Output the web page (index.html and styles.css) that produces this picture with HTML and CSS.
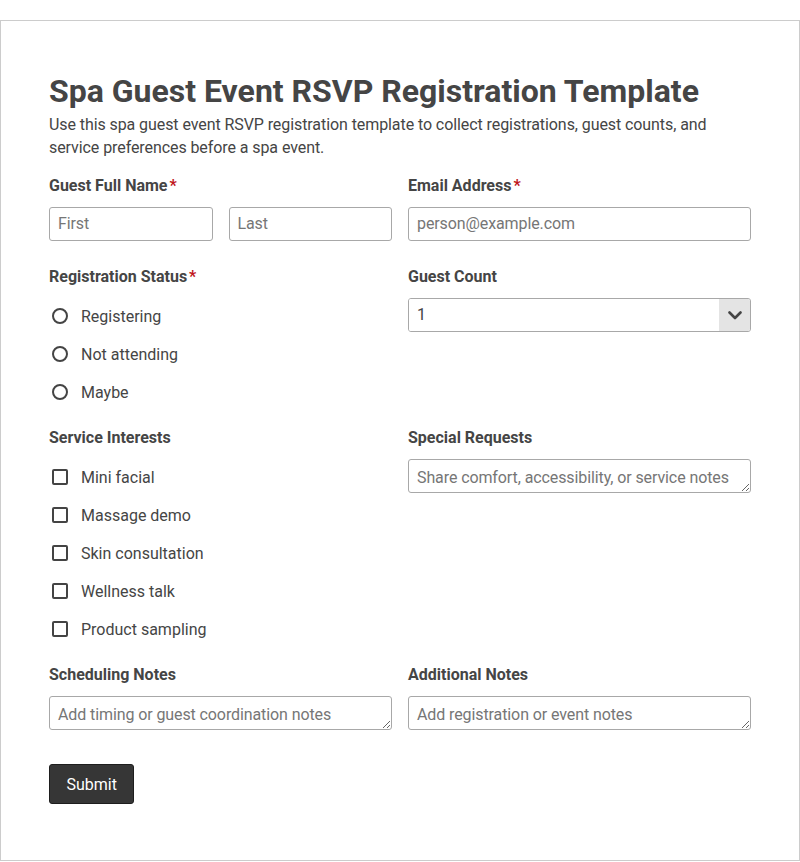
FILE: index.html
```html
<!DOCTYPE html>
<html lang="en">
<head>
<meta charset="utf-8">
<title>Spa Guest Event RSVP Registration Template</title>
<link rel="stylesheet" href="styles.css">
</head>
<body>
<form class="card">
  <h1 class="title">Spa Guest Event RSVP Registration Template</h1>
  <p class="desc">Use this spa guest event RSVP registration template to collect registrations, guest counts, and service preferences before a spa event.</p>
  <div class="grid">
    <div class="field">
      <div class="label">Guest Full Name<span class="req">*</span></div>
      <div class="name-row">
        <input class="input" type="text" placeholder="First">
        <input class="input" type="text" placeholder="Last">
      </div>
    </div>
    <div class="field">
      <div class="label">Email Address<span class="req">*</span></div>
      <input class="input" type="email" placeholder="person@example.com">
    </div>

    <div class="field">
      <div class="label">Registration Status<span class="req">*</span></div>
      <div class="options">
        <label class="option"><input class="radio" type="radio" name="status"><span>Registering</span></label>
        <label class="option"><input class="radio" type="radio" name="status"><span>Not attending</span></label>
        <label class="option"><input class="radio" type="radio" name="status"><span>Maybe</span></label>
      </div>
    </div>
    <div class="field">
      <div class="label">Guest Count</div>
      <div class="select-wrap">
        <select class="select"><option>1</option><option>2</option><option>3</option><option>4</option></select>
        <span class="select-arrow"><svg width="14" height="9" viewBox="0 0 14 9"><path d="M1.5 1.5 L7 7 L12.5 1.5" fill="none" stroke="#444" stroke-width="2.6" stroke-linecap="round" stroke-linejoin="round"/></svg></span>
      </div>
    </div>

    <div class="field">
      <div class="label">Service Interests</div>
      <div class="options">
        <label class="option"><input class="check" type="checkbox"><span>Mini facial</span></label>
        <label class="option"><input class="check" type="checkbox"><span>Massage demo</span></label>
        <label class="option"><input class="check" type="checkbox"><span>Skin consultation</span></label>
        <label class="option"><input class="check" type="checkbox"><span>Wellness talk</span></label>
        <label class="option"><input class="check" type="checkbox"><span>Product sampling</span></label>
      </div>
    </div>
    <div class="field">
      <div class="label">Special Requests</div>
      <textarea class="textarea" rows="1" placeholder="Share comfort, accessibility, or service notes"></textarea>
    </div>

    <div class="field">
      <div class="label">Scheduling Notes</div>
      <textarea class="textarea" rows="1" placeholder="Add timing or guest coordination notes"></textarea>
    </div>
    <div class="field">
      <div class="label">Additional Notes</div>
      <textarea class="textarea" rows="1" placeholder="Add registration or event notes"></textarea>
    </div>
  </div>
  <button class="submit" type="button">Submit</button>
</form>
</body>
</html>
```
FILE: styles.css
```css
* { box-sizing: border-box; }
html, body { margin: 0; padding: 0; background: #fff; }
body {
  font-family: Roboto, "Liberation Sans", Arial, sans-serif;
  color: #444;
  padding-top: 20px;
}
.card {
  border: 1px solid #ccc;
  padding: 51px 48px 56px;
  width: 800px;
}
.title {
  margin: 0;
  font-size: 32px;
  line-height: 38px;
  font-weight: 700;
  color: #454545;
}
.desc {
  margin: 3px 0 14px;
  font-size: 16px;
  line-height: 23px;
  color: #454545;
  letter-spacing: -0.08px;
}
.grid {
  display: grid;
  grid-template-columns: 1fr 1fr;
  column-gap: 16px;
  row-gap: 23px;
  align-items: start;
}
.field { display: flex; flex-direction: column; }
.label {
  font-size: 16px;
  line-height: 24px;
  padding-top: 1px;
  font-weight: 700;
  color: #454545;
  margin-bottom: 9px;
}
.req { color: #c0151b; margin-left: 2px; }
.name-row { display: grid; grid-template-columns: 1fr 1fr; column-gap: 16px; }
.input, .textarea, .select {
  font-family: Roboto, "Liberation Sans", Arial, sans-serif;
  font-size: 16px;
  color: #454545;
  letter-spacing: -0.1px;
}
.input {
  height: 34px;
  width: 100%;
  border: 1px solid #a8a8a8;
  border-radius: 3px;
  padding: 0 8px 2px;
  outline: none;
}
.input::placeholder, .textarea::placeholder { color: #767676; }
.textarea {
  height: 34px;
  min-height: 34px;
  width: 100%;
  border: 1px solid #a8a8a8;
  border-radius: 3px;
  padding: 7px 8px 3px;
  line-height: 22px;
  display: block;
  resize: vertical;
  outline: none;
}
.options { display: flex; flex-direction: column; gap: 8px; margin: 3px 0 -5px; }
.option {
  display: flex;
  align-items: center;
  height: 30px;
  font-size: 16px;
  color: #454545;
}
.radio, .check {
  appearance: none;
  -webkit-appearance: none;
  width: 16px;
  height: 16px;
  margin: 0 13px 0 3px;
  border: 2px solid #444;
  background: #fff;
  flex: none;
}
.radio { border-radius: 50%; }
.check { border-radius: 2px; }
.select-wrap {
  display: flex;
  height: 34px;
  border: 1px solid #a8a8a8;
  border-radius: 3px;
  overflow: hidden;
}
.select {
  flex: 1;
  appearance: none;
  -webkit-appearance: none;
  border: none;
  background: #fff;
  padding: 0 8px 2px;
  height: 100%;
  outline: none;
}
.select-arrow {
  width: 31px;
  background: #e4e4e4;
  display: flex;
  align-items: center;
  justify-content: center;
  padding-top: 1px;
}
.submit {
  margin-top: 34px;
  height: 40px;
  padding: 0 16.5px;
  background: #363636;
  color: #fff;
  border: 1px solid #1e1e1e;
  border-radius: 3px;
  font-family: Roboto, "Liberation Sans", Arial, sans-serif;
  font-size: 16px;
}
```
